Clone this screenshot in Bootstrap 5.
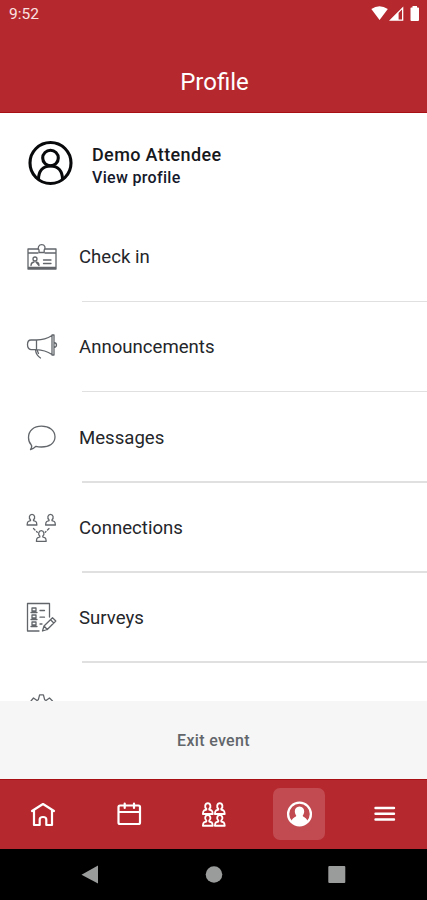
<!DOCTYPE html>
<html lang="en">
<head>
<meta charset="utf-8">
<meta name="viewport" content="width=device-width, initial-scale=1">
<title>Profile</title>
<link href="https://cdn.jsdelivr.net/npm/bootstrap@5.3.0/dist/css/bootstrap.min.css" rel="stylesheet">
<style>
body{font-family:Roboto,"Liberation Sans",sans-serif;background:#fff;height:900px;overflow:hidden;color:#24262a}
svg{display:block;flex:none}
.brand{background:#b5282e}
.top{height:113px;border-bottom:1px solid #a80f14;color:#fff}
.status{height:28px;padding:0 6px 0 9px;font-size:15.5px;line-height:28px}
.clock{color:#fbe3e3}
.title{font-size:24px;line-height:28px;padding-top:40px;padding-left:2px;letter-spacing:0}
.person{height:99px;padding-left:28px;color:#16181c}
.person-text{margin-left:18px;padding-top:8px}
.person-name{font-size:18px;line-height:22px;font-weight:500;letter-spacing:.37px}
.person-link{font-size:16px;line-height:23px;font-weight:500;color:#15192b;letter-spacing:.32px}
.items{height:489px;overflow:hidden}
.item{height:90.2px;padding-left:24px;position:relative;font-size:18.6px;letter-spacing:0}
.item::after{content:"";position:absolute;left:82px;right:0;bottom:0;height:1.5px;background:#e0e0e0}
.item svg{margin-right:21px}
.item-label{padding-top:2px}
.line{fill:none;stroke:#62666b;stroke-width:1.3;stroke-linecap:round;stroke-linejoin:round}
.exit{height:78px;padding-top:2px;background:#f6f6f6;color:#62666b;font-size:16px;font-weight:500;letter-spacing:.32px}
.tabs{height:70px;border-top:1px solid #a80f14}
.tab{width:52px;height:52px;border-radius:7px;margin-top:-2px}
.tab.active{background:#c14b51}
.white{fill:none;stroke:#fff;stroke-width:2.2;stroke-linecap:round;stroke-linejoin:round}
.system{height:51px;background:#000}
</style>
</head>
<body class="d-flex flex-column">
<svg width="0" height="0" class="position-absolute"><defs>
<g id="bust"><path d="M3.500 6.200C1.500 4.800 2.200 .8 5 .8S8.500 4.800 6.500 6.200V7.200L8.800 8Q9.700 8.500 9.900 11.500H.1Q.3 8.500 1.200 8L3.500 7.200Z"/></g>
</defs></svg>
<header class="brand top flex-shrink-0">
  <div class="status d-flex justify-content-between">
    <span class="clock">9:52</span>
    <svg width="51" height="28" viewBox="370 0 51 28" fill="#fff"><path d="M371.300 9Q379.500 3.500 387.800 9L379.600 20Z"/><path fill-rule="evenodd" d="M389 20.700L403.300 6.500V20.700ZM398.600 13V19.600H402V9.600Z"/><path d="M412.500 6H417V7.400H418.200Q419 7.400 419 8.200V20Q419 21 418 21H411.500Q410.500 21 410.500 20V8.200Q410.500 7.400 411.300 7.400H412.500Z"/></svg>
  </div>
  <h1 class="title text-center fw-normal mb-0">Profile</h1>
</header>
<main class="flex-shrink-0">
  <section class="person d-flex align-items-center">
    <svg width="46" height="46" viewBox="0 0 46 46" fill="none" stroke="#08090b" stroke-width="3.100"><circle cx="22.500" cy="23" r="20.500"/><circle cx="22.500" cy="18" r="7.800"/><path d="M10.500 39.500C10.500 31 15 26 22.500 26S34.500 31 34.500 39.500"/></svg>
    <div class="person-text"><div class="person-name">Demo Attendee</div><div class="person-link">View profile</div></div>
  </section>
  <div class="items">
    <div class="item d-flex align-items-center"><svg width="34" height="34" viewBox="24 240 34 34" class="line"><path d="M38 249H28V269H56V249H45M28 253H38M45 253H56M28 267.500H56"/><path d="M39 252.500V250Q37.600 248.500 38.600 246.500 39.600 244.700 41.700 244.700 44 244.700 44.800 246.500 45.600 248.500 44.200 250V252.500Z"/><circle cx="35" cy="259" r="2"/><path d="M31 265.500Q31 262.500 34 262M36 262Q39 262.500 39 265.500ZM43.500 260H51M43.500 263.500H51"/></svg><span class="item-label">Check in</span></div>
    <div class="item d-flex align-items-center"><svg width="34" height="34" viewBox="24 330 34 34" class="line"><path d="M36.500 340H31Q27.500 340 27.500 344.500T31 349.700H36.500ZM36.500 340Q45 340 52 335.500V354.500Q45 350 36.500 349.700M52 335H54V355H52M54 342.500Q56.500 343 56.500 345T54 347.500M35.500 350Q36 355 40.500 358M37 350L38.500 353.500"/></svg><span class="item-label">Announcements</span></div>
    <div class="item d-flex align-items-center"><svg width="34" height="34" viewBox="24 420 34 34" class="line"><path d="M30.500 449.500Q32.500 446.500 31.200 444.800 28.500 442 28.500 437.500C28.500 430.500 34 426.200 41.500 426.200S55 430 55 436.800 49 447 41.500 447Q38 447 36 446.300 33.500 448.800 30.500 449.500Z"/></svg><span class="item-label">Messages</span></div>
    <div class="item d-flex align-items-center"><svg width="34" height="34" viewBox="24 510.500 34 34" class="line"><use href="#bust" x="27" y="513"/><use href="#bust" x="45.500" y="513"/><use href="#bust" x="36.300" y="529.300"/><path d="M33.500 528L35 529.500M36.500 531L37.300 531.800M49 528L47.500 529.500M46 531L45.200 531.800"/></svg><span class="item-label">Connections</span></div>
    <div class="item d-flex align-items-center"><svg width="34" height="34" viewBox="24 601 34 34" class="line"><path d="M49.500 617V603.500H27.500V631H39M29 631H38"/><path d="M32 608H36V611H32ZM32 615H36V618H32ZM32 622H36V625H32ZM40 610.500H44.500M40 617.200H44.500M40 624H42M31 612.500H37M31 619.500H37M31 626.500H37"/><path d="M42.500 631L44 626 52.500 617.800 55.800 621 47.300 629.500ZM44 626L47.300 629.500M50.500 619.800L53.800 623"/></svg><span class="item-label">Surveys</span></div>
    <div class="item d-flex align-items-center"><svg width="34" height="34" viewBox="24 691 34 34" class="line"><path d="M31 701L33.500 698 37 700.500 38.300 699.800 39.600 694.800H43.400L44.700 699.800 46 700.500 49.500 698 52.500 701 51.500 705 52 708 55 709V712H28V709L31 708 31.500 705Z"/></svg></div>
  </div>
</main>
<div class="exit d-flex align-items-center justify-content-center flex-shrink-0">Exit event</div>
<nav class="tabs brand d-flex align-items-center justify-content-around flex-shrink-0">
  <a href="#" class="tab" aria-label="Home"><svg width="52" height="52" viewBox="16.500 788 52 52" class="white"><path d="M31.500 811L42.500 804 53.500 811M33.500 810.500V825H39.200V819.500Q39.200 817 42.500 817T45.800 819.500V825H51.500V810.500"/></svg></a>
  <a href="#" class="tab" aria-label="Schedule"><svg width="52" height="52" viewBox="102 788 52 52" class="white"><rect x="118.500" y="805.500" width="21.500" height="18.500" rx="1.500"/><path d="M119 812H140M124.700 803.500V808M134 803.500V808"/></svg></a>
  <a href="#" class="tab" aria-label="Attendees"><svg width="52" height="52" viewBox="187.500 788 52 52" class="white"><g stroke-width="1.900"><use href="#bust" x="203.300" y="802.500"/><use href="#bust" x="215.300" y="802.500"/><use href="#bust" x="203.300" y="814.300"/><use href="#bust" x="215.300" y="814.300"/></g></svg></a>
  <a href="#" class="tab active" aria-label="Profile"><svg width="52" height="52" viewBox="273 788 52 52" class="white"><circle cx="299.500" cy="814" r="11.400" stroke-width="2.300"/><path fill="#fff" stroke="none" d="M299.500 806.500C302.600 806.500 304.200 808.700 304.200 811.300 304.200 813.500 303.200 814.800 302.700 815.700 303 817 306.800 817.500 307.800 821.500Q304.500 825 299.500 825T291.200 821.500C292.200 817.500 296 817 296.300 815.700 295.800 814.800 294.800 813.500 294.800 811.300 294.800 808.700 296.400 806.500 299.500 806.500Z"/></svg></a>
  <a href="#" class="tab" aria-label="Menu"><svg width="52" height="52" viewBox="358.500 788 52 52" class="white"><path d="M376 808H394.500M376 813.800H394.500M376 819.500H394.500" stroke-width="2.400"/></svg></a>
</nav>
<footer class="system flex-shrink-0"><svg width="427" height="51" viewBox="0 849 427 51" fill="#9a9c9b"><path d="M98 865.500V883.500L81.500 874.700Z"/><circle cx="214" cy="874.500" r="8.300"/><rect x="328.300" y="866" width="17" height="17" rx="1"/></svg></footer>
<script src="https://cdn.jsdelivr.net/npm/bootstrap@5.3.0/dist/js/bootstrap.bundle.min.js"></script>
</body>
</html>
